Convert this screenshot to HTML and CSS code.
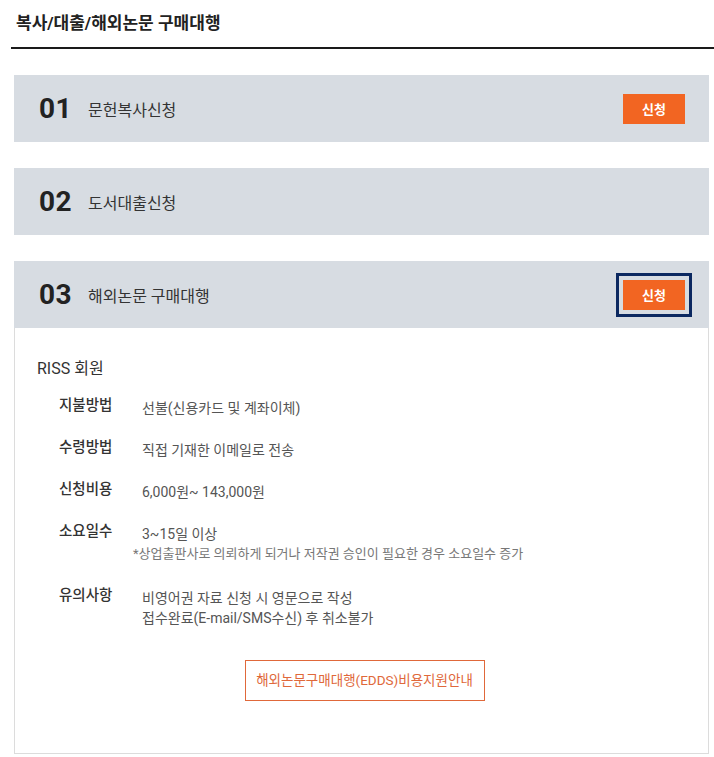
FILE: index.html
```html
<!DOCTYPE html>
<html lang="ko">
<head>
<meta charset="utf-8">
<title>복사/대출/해외논문 구매대행</title>
<link rel="stylesheet" href="styles.css">
</head>
<body>
<div class="page-title">복사/대출/해외논문 구매대행</div>
<div class="list">
  <div class="item">
    <div class="item-head">
      <span class="num">01</span>
      <span class="name">문헌복사신청</span>
      <button class="apply">신청</button>
    </div>
  </div>
  <div class="item">
    <div class="item-head">
      <span class="num">02</span>
      <span class="name">도서대출신청</span>
    </div>
  </div>
  <div class="item">
    <div class="item-head">
      <span class="num">03</span>
      <span class="name">해외논문 구매대행</span>
      <button class="apply focused">신청</button>
    </div>
    <div class="item-body">
      <div class="member">RISS 회원</div>
      <div class="rows">
        <div class="row"><div class="label">지불방법</div><div class="value">선불(신용카드 및 계좌이체)</div></div>
        <div class="row"><div class="label">수령방법</div><div class="value">직접 기재한 이메일로 전송</div></div>
        <div class="row"><div class="label">신청비용</div><div class="value">6,000원~ 143,000원</div></div>
        <div class="row"><div class="label">소요일수</div><div class="value">3~15일 이상<div class="note">*상업출판사로 의뢰하게 되거나 저작권 승인이 필요한 경우 소요일수 증가</div></div></div>
        <div class="row row-last"><div class="label">유의사항</div><div class="value">비영어권 자료 신청 시 영문으로 작성<br>접수완료(E-mail/SMS수신) 후 취소불가</div></div>
      </div>
      <div class="guide-wrap"><a class="guide">해외논문구매대행(EDDS)비용지원안내</a></div>
    </div>
  </div>
</div>
</body>
</html>
```

FILE: styles.css
```css
* { box-sizing: border-box; }
body {
  margin: 0;
  font-family: Roboto, "Noto Sans CJK KR", sans-serif;
  color: #222;
  background: #fff;
}
.page-title {
  height: 49px;
  margin-left: 11px;
  padding-left: 5px;
  font-size: 17px;
  font-weight: 700;
  line-height: 47px;
  border-bottom: 2px solid #1a1a1a;
  color: #222;
}
.list {
  margin: 26px 5px 0 14px;
  display: flex;
  flex-direction: column;
  gap: 26px;
}
.item-head {
  height: 67px;
  background: #d7dce2;
  display: flex;
  align-items: center;
  padding: 0 24px 0 25px;
}
.num {
  font-size: 28px;
  font-weight: 700;
  color: #222;
  width: 49px;
  letter-spacing: 0.5px;
}
.name {
  font-size: 16px;
  color: #333;
  flex: 1;
}
.apply {
  width: 62px;
  height: 30px;
  border: 0;
  background: #f26522;
  color: #fff;
  font-family: Roboto, "Noto Sans CJK KR", sans-serif;
  font-size: 13px;
  font-weight: 700;
  padding: 0;
}
.apply.focused {
  outline: 3px solid #0b2860;
  outline-offset: 4px;
}
.item-body {
  border: 1px solid #dcdcdc;
  border-top: 0;
  padding: 30px 22px 52px;
}
.member {
  font-size: 16px;
  line-height: 22px;
  color: #333;
}
.rows {
  margin-top: 16px;
  padding-left: 22px;
  display: flex;
  flex-direction: column;
  gap: 20px;
}
.row {
  display: flex;
  align-items: flex-start;
}
.row-last {
  margin-top: 2px;
}
.label {
  width: 83px;
  font-size: 14.5px;
  line-height: 20px;
  font-weight: 500;
  color: #333;
}
.value {
  font-size: 14px;
  line-height: 20px;
  color: #555;
  padding-top: 2px;
}
.note {
  margin-left: -9px;
  font-size: 13px;
  color: #777;
}
.guide-wrap {
  margin-top: 32px;
  display: flex;
  justify-content: center;
}
.guide {
  display: block;
  width: 240px;
  height: 41px;
  border: 1px solid #e0683a;
  color: #e0683a;
  font-size: 13.5px;
  line-height: 39px;
  text-align: center;
  margin-left: 6px;
}
```
